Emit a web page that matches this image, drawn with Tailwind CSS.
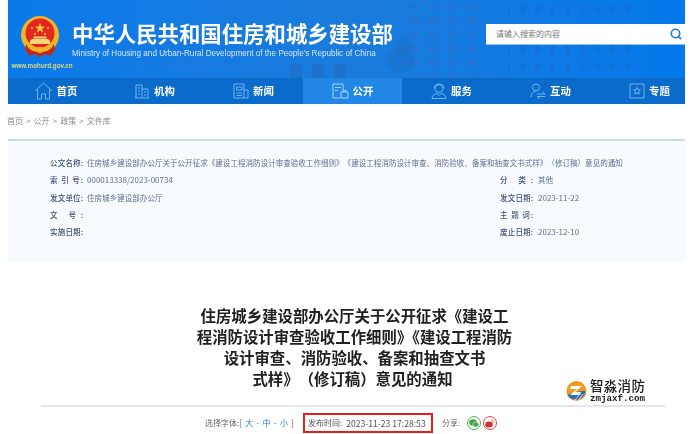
<!DOCTYPE html>
<html lang="zh-CN">
<head>
    <meta charset="UTF-8">
    <meta name="viewport" content="width=device-width, initial-scale=1.0">
    <title>住房城乡建设部办公厅</title>
    <script src="https://cdn.jsdelivr.net/npm/@tailwindcss/browser@4"></script>
</head>
<body class="bg-white h-[434px] overflow-hidden relative font-['Noto_Sans_CJK_SC','Noto_Sans',sans-serif]">
    <div class="blur-[0.35px]">
        <!-- header -->
        <header class="ml-2 w-[677px] h-[78px] relative overflow-hidden bg-gradient-to-r from-[#0a7ae9] via-[#1a7bdc] to-[#0379ea]">
            <svg class="absolute left-0 top-0" width="677" height="78" viewBox="0 0 677 78" fill="none">
                <defs>
                    <pattern id="wins" width="19" height="14" patternUnits="userSpaceOnUse">
                        <rect x="2" y="3" width="11" height="7" fill="#2a6fc8" opacity=".45"/>
                    </pattern>
                    <pattern id="wins2" width="15" height="20" patternUnits="userSpaceOnUse">
                        <rect x="2" y="4" width="5" height="10" fill="#1566c4" opacity=".35"/>
                    </pattern>
                </defs>
                <rect x="392" y="4" width="86" height="74" fill="url(#wins)"/>
                <rect x="500" y="6" width="130" height="64" fill="url(#wins2)"/>
                <rect x="100" y="50" width="120" height="20" fill="url(#wins)" opacity=".4"/>
                <path d="M282 78v-9a6 6 0 0 1 12 0v9zM304 78v-9a6 6 0 0 1 12 0v9zM326 78v-9a6 6 0 0 1 12 0v9z" fill="#2368b4" opacity=".45"/>
                <circle cx="396" cy="46" r="9" fill="#1f63ad" opacity=".22"/>
                <circle cx="392" cy="60" r="13" fill="#1f63ad" opacity=".22"/>
            </svg>
            <div class="relative flex h-full">
                <div class="w-[64px] shrink-0 flex flex-col items-center pt-[16px]">
                    <svg width="40" height="42" viewBox="0 0 40 42">
                        <circle cx="20" cy="19" r="19" fill="#f0b429"/>
                        <circle cx="20" cy="17" r="14.500" fill="#e5281f"/>
                        <path d="M20 7l1.300 3.600h3.800l-3 2.300 1.100 3.600-3.200-2.100-3.200 2.100 1.100-3.600-3-2.300h3.800z" fill="#f6c93d"/>
                        <circle cx="12" cy="12" r="1.100" fill="#f6c93d"/><circle cx="28" cy="12" r="1.100" fill="#f6c93d"/>
                        <circle cx="15" cy="18" r="1.100" fill="#f6c93d"/><circle cx="25" cy="18" r="1.100" fill="#f6c93d"/>
                        <path d="M12 23h16l2 2v3H10v-3zM14 20.500h12l1 2H13z" fill="#f8d874"/>
                        <path d="M6 28c3 7 9 8 14 8s11-1 14-8l1 6-5 6-5-2-5 3-5-3-5 2-5-6z" fill="#c8251d"/>
                        <circle cx="20" cy="34" r="3" fill="#f0b429"/>
                    </svg>
                    <div class="text-[6.300px] leading-[10px] mt-[3px] ml-[4px] font-bold text-[#d9d97a] whitespace-nowrap font-['Liberation_Sans',sans-serif]">www.mohurd.gov.cn</div>
                </div>
                <div class="pt-[18px]">
                    <div class="text-[21.400px] leading-[30px] font-bold text-white whitespace-nowrap">中华人民共和国住房和城乡建设部</div>
                    <div class="text-[8.150px] leading-[10px] mt-[1px] text-[#d5e6f8] whitespace-nowrap font-['Liberation_Sans',sans-serif]">Ministry of Housing and Urban-Rural Development of the People's Republic of China</div>
                </div>
                <div class="absolute left-[478px] top-[24px] w-[199px] h-[21px] bg-white border-b border-[#8fc0f2] flex items-center justify-between pl-[10px] pr-[3px]">
                    <span class="text-[8px] text-[#777]">请输入搜索的内容</span>
                    <svg width="12" height="12" viewBox="0 0 12 12" fill="none" stroke="#1f78d8" stroke-width="1.600"><circle cx="5.500" cy="5.500" r="4.200"/><path d="M8.500 8.500l2.600 2.600"/></svg>
                </div>
            </div>
        </header>

        <!-- nav -->
        <nav class="ml-2 w-[677px] h-[26px] overflow-hidden bg-[#0b6bcb]">
            <div class="flex h-full -ml-[2px] w-[700px] text-white text-[10.400px] font-bold">
                <a class="w-[99px] shrink-0 flex items-center justify-center gap-[4px]">
                    <svg width="19" height="18" viewBox="0 0 19 18" fill="none" stroke="#6db5f2" stroke-width="1"><path d="M1 9l8.500-8 8.500 8M3.500 7.500V17h4v-5h4v5h4V7.500"/></svg>首页</a>
                <a class="w-[99px] shrink-0 flex items-center justify-center gap-[4px]">
                    <svg width="16" height="15" viewBox="0 0 16 15" fill="none" stroke="#6db5f2" stroke-width="1"><path d="M1 14h14M2 14V1h6v13M8 5h6v9M4 4h2M4 7h2M4 10h2M10 8h2M10 11h2"/></svg>机构</a>
                <a class="w-[99px] shrink-0 flex items-center justify-center gap-[4px]">
                    <svg width="16" height="16" viewBox="0 0 16 16" fill="none" stroke="#6db5f2" stroke-width="1"><path d="M11 15H1V1h10zM11 7h4v8h-4M3.500 4h5.500v3H3.500zM3.500 10h5.500M3.500 12.500h5.500"/></svg>新闻</a>
                <a class="w-[99px] shrink-0 flex items-center justify-center gap-[4px] bg-[#2186e4]">
                    <svg width="17" height="16" viewBox="0 0 17 16" fill="none" stroke="#a6d2f7" stroke-width="1"><path d="M8 15H1V1h10v6M3 4.500h6M3 7.500h3"/><path d="M9 9h7v6H9zM11 9V7.500h3V9"/></svg>公开</a>
                <a class="w-[99px] shrink-0 flex items-center justify-center gap-[4px]">
                    <svg width="16" height="16" viewBox="0 0 16 16" fill="none" stroke="#6db5f2" stroke-width="1"><circle cx="8" cy="5.500" r="4"/><path d="M3 5.500c0-6 10-6 10 0M1 15.500c0-3 3-5 5-5l2 2 2-2c2 0 5 2 5 5z"/></svg>服务</a>
                <a class="w-[99px] shrink-0 flex items-center justify-center gap-[4px]">
                    <svg width="16" height="16" viewBox="0 0 16 16" fill="none" stroke="#6db5f2" stroke-width="1"><circle cx="6" cy="4.500" r="3.500"/><path d="M1 14c0-3 2-5.500 4.500-5.500M7 11h8l-2.500-2.500M15 13.500H7l2.500 2"/></svg>互动</a>
                <a class="w-[99px] shrink-0 flex items-center justify-center gap-[4px]">
                    <svg width="16" height="16" viewBox="0 0 16 16" fill="none" stroke="#6db5f2" stroke-width="1"><path d="M1 1h14v14H1z"/><path d="M8 4.500l1 2.300 2.400.2-1.800 1.600.6 2.400L8 9.800 5.800 11l.6-2.400L4.600 7 7 6.800z"/></svg>专题</a>
            </div>
        </nav>

        <!-- breadcrumb -->
        <div class="h-[35px] flex items-center pl-[7px] pb-[2px] text-[8px] text-[#888] whitespace-nowrap [word-spacing:1.300px]">首页 &gt; 公开 &gt; 政策 &gt; 文件库</div>

        <!-- document info -->
        <section class="ml-2 w-[677px] h-[123px] bg-[#f7fbff] border-t-2 border-[#c7dbf0] pt-[13px] pl-[42px] text-[7.550px] leading-[17.300px] text-[#5f6f8f] whitespace-nowrap">
            <div class="flex">
                <span class="w-[33px] font-medium text-[#45557c] [text-align-last:justify]">公文名称:</span>
                <span class="ml-[4px] [text-spacing-trim:space-all]">住房城乡建设部办公厅关于公开征求《建设工程消防设计审查验收工作细则》《建设工程消防设计审查、消防验收、备案和抽查文书式样》（修订稿）意见的通知</span>
            </div>
            <div class="grid grid-cols-[450px_1fr]">
                <div class="flex"><span class="w-[33px] font-medium text-[#45557c] [text-align-last:justify]">索 引 号:</span><span class="ml-[4px] text-[8px]">000013338/2023-00734</span></div>
                <div class="flex"><span class="w-[33px] font-medium text-[#45557c] [text-align-last:justify]">分 类:</span><span class="ml-[5px]">其他</span></div>
                <div class="flex"><span class="w-[33px] font-medium text-[#45557c] [text-align-last:justify]">发文单位:</span><span class="ml-[4px]">住房城乡建设部办公厅</span></div>
                <div class="flex"><span class="w-[33px] font-medium text-[#45557c] [text-align-last:justify]">发文日期:</span><span class="ml-[5px] text-[8px]">2023-11-22</span></div>
                <div class="flex"><span class="w-[33px] font-medium text-[#45557c] [text-align-last:justify]">文 号:</span></div>
                <div class="flex"><span class="w-[33px] font-medium text-[#45557c] [text-align-last:justify]">主 题 词:</span></div>
                <div class="flex"><span class="w-[33px] font-medium text-[#45557c] [text-align-last:justify]">实施日期:</span></div>
                <div class="flex"><span class="w-[33px] font-medium text-[#45557c] [text-align-last:justify]">废止日期:</span><span class="ml-[5px] text-[8px]">2023-12-10</span></div>
            </div>
        </section>

        <!-- article title -->
        <h1 class="mt-[43px] ml-[18px] text-center text-[15.400px] leading-[21px] font-bold text-[#222]">住房城乡建设部办公厅关于公开征求《建设工<br>程消防设计审查验收工作细则》《建设工程消防<br>设计审查、消防验收、备案和抽查文书<br><span class="-ml-[4px] [text-spacing-trim:space-all]">式样》（修订稿）意见的通知</span></h1>

        <!-- meta row -->
        <div class="mt-[16px] ml-[41px] w-[624px] border-t-2 border-[#e2e7ee] flex items-center h-[34px] pl-[164px] text-[8px] text-[#666] whitespace-nowrap">
            <span class="[word-spacing:1.500px]">选择字体:[ <span class="text-[#2b7fd4]">大</span> - <span class="text-[#2b7fd4]">中</span> - <span class="text-[#2b7fd4]">小</span> ]</span>
            <span class="ml-[9px] w-[130px] h-[20px] border-2 border-[#e3201b] flex items-center pl-[3px] text-[#555]">发布时间:<span class="ml-[4px] text-[8.600px]">2023-11-23 17:28:53</span></span>
            <span class="ml-[9px]">分享:</span>
            <span class="ml-[7px] w-[14px] h-[14px] rounded-full border border-[#4cb050] flex items-center justify-center">
                <svg width="10" height="9" viewBox="0 0 10 9"><ellipse cx="4" cy="3.500" rx="3.800" ry="3.200" fill="#3fa845"/><ellipse cx="6.800" cy="5.500" rx="3" ry="2.500" fill="#3fa845" stroke="#fff" stroke-width=".5"/></svg>
            </span>
            <span class="ml-[2px] w-[14px] h-[14px] rounded-full border border-[#e0424a] flex items-center justify-center">
                <svg width="10" height="9" viewBox="0 0 10 9"><ellipse cx="4" cy="5.500" rx="3.800" ry="3" fill="#d8303a"/><path d="M6 1c2-.5 3.500 1 3 3M6.500 2.500c1-.2 1.500.4 1.300 1.300" fill="none" stroke="#e8902a" stroke-width=".9"/></svg>
            </span>
        </div>
    </div>

    <!-- watermark -->
    <div class="absolute left-[566px] top-[378px] flex items-center gap-[3px]">
        <svg width="21" height="22" viewBox="0 0 21 22">
            <circle cx="10.500" cy="11" r="10" fill="#f29a1f"/>
            <path d="M1.500 15c4-2 11-4 18-4a10 10 0 0 1-17.500 5z" fill="#2a6fb8"/>
            <path d="M5 6h11l-7 6h6l-2 3H4l7-6H4z" fill="#fff"/>
            <path d="M8 21l7-8M12 21l5-7" stroke="#fff" stroke-width=".7"/>
        </svg>
        <div class="text-[#222]">
            <div class="text-[13.500px] leading-[15px] font-medium tracking-[0.3px]">智淼消防</div>
            <div class="text-[9.200px] leading-[11px] font-bold font-['Liberation_Mono',monospace]">zmjaxf.com</div>
        </div>
    </div>
</body>
</html>
